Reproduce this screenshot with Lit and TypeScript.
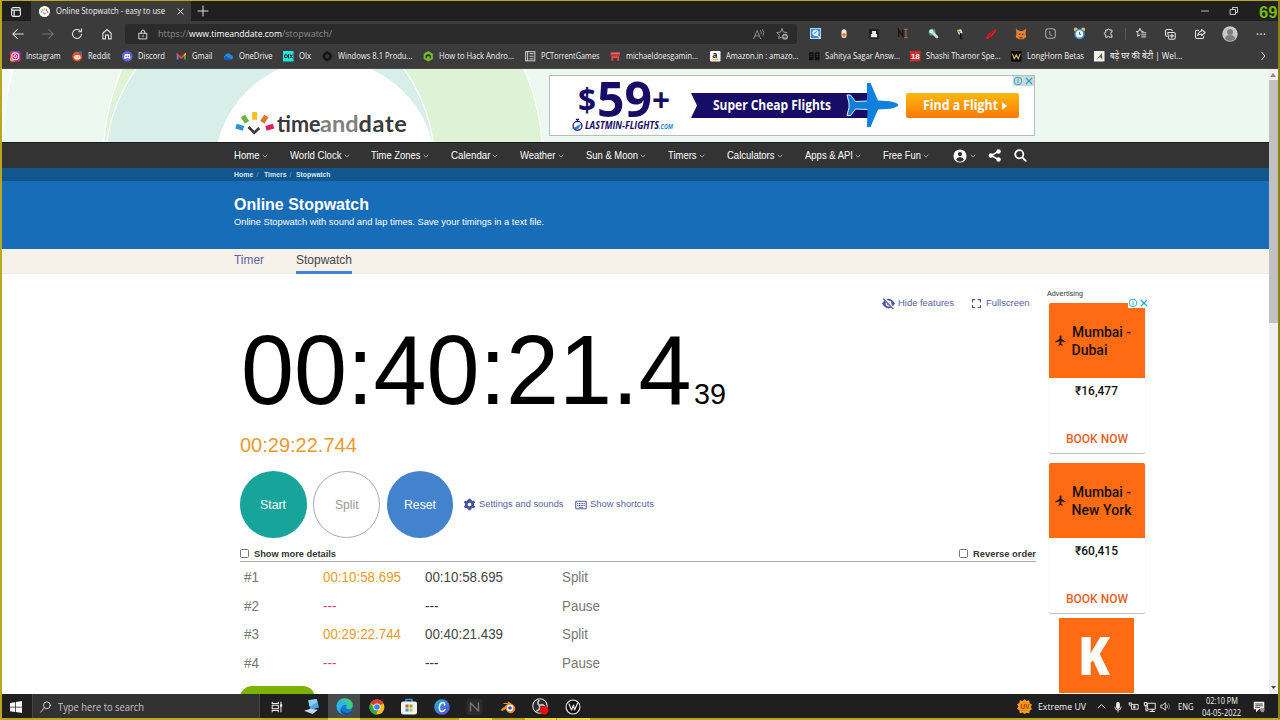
import { LitElement, html, svg, css } from "lit";
import { customElement } from "lit/decorators.js";

/* Text run that settles on an exact width: condensed when too wide, tracked out when too narrow. */
const t = (text: string, w = 0, cls = "") =>
  html`<span class="t ${cls}" data-w=${w}>${text}</span>`;

/* Row whose items begin at the listed x positions. */
const track = (cls: string, items: Array<[number, unknown]>, origin = 0) => {
  const xs = items.map((i) => i[0]);
  const cols = xs.map((x, i) => (i < xs.length - 1 ? `${(xs[i + 1] - x).toFixed(2)}px` : "auto")).join(" ");
  return html`<div class="track ${cls}" style="padding-left:${xs[0] - origin}px;grid-template-columns:${cols}">
    ${items.map((i) => html`<div class="cell">${i[1]}</div>`)}
  </div>`;
};

const icon = (w: number, h: number, body: unknown, vb = "0 0 16 16") =>
  html`<svg width=${w} height=${h} viewBox=${vb}>${body}</svg>`;
const line = (d: string, c = "#e4e4e4", sw = 1.4) =>
  svg`<path d=${d} fill="none" stroke=${c} stroke-width=${sw} stroke-linecap="round" stroke-linejoin="round"/>`;

const chev = icon(6, 6, line("M1 2l2 2.200 2-2.200", "#8fa0b5", 1), "0 0 6 6");

const toolbar: Array<[number, unknown]> = [
  [12, icon(12, 12, line("M15 8H1M7 2L1 8l6 6"))],
  [42, icon(12, 12, line("M1 8h14M9 2l6 6-6 6", "#777"))],
  [71, icon(12, 12, line("M14 8a6 6 0 1 1-2-4.500M14 1v4h-4"))],
  [101, icon(12, 12, line("M2.500 7L8 2l5.500 5v7.500h-3.500V9.500H6v5H2.500z"))],
];

const extensions: Array<[number, unknown]> = [
  [810, icon(11, 11, svg`<rect width="16" height="16" rx="1" fill="#3b8ad8"/><rect x=".7" y=".7" width="14.600" height="14.600" fill="none" stroke="#b8dcf8" stroke-width="1.400"/><circle cx="8" cy="7" r="4.500" fill="#e8f4fd"/><path d="M6 8l4-3" stroke="#3b8ad8" stroke-width="1.500"/><path d="M10 10l4 4" stroke="#fff" stroke-width="2"/>`)],
  [839, icon(10, 11, svg`<path d="M4 5q0-4 4-4t4 4v6q0 4-4 4t-4-4z" fill="#f6e9da"/><circle cx="8" cy="10" r="3" fill="#e8742c"/>`)],
  [869, icon(10, 10, svg`<rect width="16" height="16" rx="2" fill="#1f1f1f"/><path d="M5 3h6v5h2v5H3V8h2z" fill="#eee"/>`)],
  [898, icon(11, 11, svg`<path d="M1 13V3l6 9V3" fill="none" stroke="#171717" stroke-width="2.200"/><path d="M9 2h5M11.500 2v12M9 14h5" stroke="#a5673f" stroke-width="1.600" fill="none"/>`)],
  [928, icon(11, 11, svg`<circle cx="6" cy="6" r="5" fill="#4a9a9a"/><circle cx="5" cy="5" r="3" fill="#d9eef0"/><path d="M8 8l5 5" stroke="#d3dcdc" stroke-width="4" stroke-linecap="round"/>`)],
  [955, icon(11, 12, svg`<path d="M3 2l6-1 2 5-3 4-3-2z" fill="#f0d9b0"/><path d="M7 6l3 1-1 6 4 2H7z" fill="#101010"/><path d="M4 3l4 1-2 3z" fill="#b07b35"/>`)],
  [985, icon(12, 12, svg`<path d="M14 1l1 3-6 7-6 4-2-2 5-6z" fill="#e01b25"/><path d="M12 3L5 12" stroke="#8e0a12"/>`)],
  [1015, icon(12, 12, svg`<path d="M1 1l5 3h4l5-3-1 6 1 5-4 3H5l-4-3 1-5z" fill="#e9802c"/><path d="M5 8l2 1M11 8l-2 1M6 13h4" stroke="#45220f" stroke-width="1.500"/>`)],
  [1045, icon(11, 11, svg`<rect x="1" y="1" width="14" height="14" rx="4" fill="none" stroke="#aaa" stroke-width="1.500"/>${line("M7 5v4q0 2 3 2", "#aaa")}`)],
  [1073, icon(13, 13, svg`<circle cx="3.500" cy="3" r="2.500" fill="#e9c04a"/><circle cx="12.500" cy="3" r="2.500" fill="#e9c04a"/><circle cx="8" cy="8.500" r="6.500" fill="#3f8fd4"/><circle cx="8" cy="8.500" r="4.500" fill="#eef6fc"/><path d="M8 6v3h2" stroke="#28609a" fill="none"/>`)],
  [1103, icon(11, 11, line("M4 3h2.500a1.500 1.500 0 0 1 3 0H13v3a2 2 0 0 0 0 4v3.500H9.500a1.500 1.500 0 0 0-3 0H4V10a2 2 0 0 1 0-4z"))],
  [1118, html`<i class="sep"></i>`],
  [1135, icon(12, 11, line("M6.500 1l1.600 3.600L11 5M6.500 1L4.800 4.600 1 5.200l2.800 2.600L3 12l3.500-2M9 7h6M9 10h6M9 13h6"))],
  [1164, icon(12, 12, line("M4 11q-2 0-2-2V4q0-2 2-2h5q2 0 2 1.500M5 6h8q2 0 2 2v5q0 2-2 2H8q-2 0-2-2zM10.500 8v5M8 10.500h5"))],
  [1194, icon(12, 12, line("M6 3H4Q2 3 2 5v7q0 2 2 2h7q2 0 2-2v-1M10 2l5 4-5 4V8q-3 0-5 2 1-5 5-6z"))],
  [1222, icon(16, 16, svg`<circle cx="8" cy="8" r="7.700" fill="#c9c9c9"/><circle cx="8" cy="6" r="3" fill="#7d7d7d"/><path d="M3 13q0-4 5-4t5 4q-5 4-10 0z" fill="#7d7d7d"/>`)],
  [1256, icon(10, 10, svg`<g fill="#e4e4e4"><circle cx="2.500" cy="8" r="1.400"/><circle cx="8" cy="8" r="1.400"/><circle cx="13.500" cy="8" r="1.400"/></g>`)],
];

const marks: Array<[number, unknown, string, number]> = [
  [9.5, svg`<rect width="16" height="16" rx="4" fill="#d6337c"/><path d="M0 10l8 6H4q-4 0-4-4z" fill="#f5a83c"/><path d="M6 0h6q4 0 4 4v3z" fill="#7a3fd0"/><rect x="3" y="3" width="10" height="10" rx="3" fill="none" stroke="#fff" stroke-width="1.500"/><circle cx="8" cy="8" r="2.300" fill="none" stroke="#fff" stroke-width="1.500"/>`, "Instagram", 34.5],
  [71.5, svg`<circle cx="8" cy="8.500" r="7.500" fill="#ff4c1c"/><ellipse cx="8" cy="9.500" rx="5" ry="3.500" fill="#fff"/><circle cx="6" cy="9" r="1" fill="#ff4c1c"/><circle cx="10" cy="9" r="1" fill="#ff4c1c"/><circle cx="13" cy="2.500" r="2.500" fill="#256ec2"/>`, "Reddit", 22.5],
  [121.5, svg`<circle cx="8" cy="8" r="8" fill="#5865f2"/><path d="M4 5q4-2 8 0l1 6-2 1-1-1H6l-1 1-2-1z" fill="#fff"/><circle cx="6.300" cy="8.300" r="1.100" fill="#5865f2"/><circle cx="9.700" cy="8.300" r="1.100" fill="#5865f2"/>`, "Discord", 27],
  [175.5, svg`<path d="M1 3v10h3V6z" fill="#4285f4"/><path d="M15 3v10h-3V6z" fill="#34a853"/><path d="M1 2.500l7 6 7-6v4l-7 5.500-7-5.500z" fill="#ea4335"/><path d="M12 5l3-2.500V6l-3 2.500z" fill="#fbbc04"/>`, "Gmail", 20.5],
  [222.5, svg`<path d="M3 13a3.500 3.500 0 0 1 0-6 5 5 0 0 1 9-1 3.600 3.600 0 0 1 1 7z" fill="#1f8be0"/><path d="M3 13a3 3 0 0 1 2-5l8 5z" fill="#0b5fb8"/>`, "OneDrive", 33.5],
  [282.5, svg`<rect width="16" height="16" fill="#23e5db"/><circle cx="4.500" cy="8" r="2.200" fill="none" stroke="#002f34" stroke-width="1.600"/><path d="M8.500 4.500v7M10.500 5.500l4 5M14.500 5.500l-4 5" stroke="#002f34" stroke-width="1.600"/>`, "Olx", 12],
  [321.5, svg`<circle cx="8" cy="8" r="5" fill="none" stroke="#161616" stroke-width="4"/><path d="M8 0v3M8 13v3M0 8h3M13 8h3" stroke="#161616" stroke-width="2.500"/>`, "Windows 8.1 Produ...", 74.5],
  [422.5, svg`<path d="M8 0l7 4v8l-7 4-7-4V4z" fill="#78b82a"/><path d="M4 11V7q4-4 8 0v4h-2V8H6v3z" fill="#243611"/>`, "How to Hack Andro...", 75],
  [524.5, svg`<rect x="1" y="1" width="14" height="14" fill="none" stroke="#ddd" stroke-width="1.400"/><path d="M4 1v14M7 4h6M7 8h6M7 12h6" stroke="#ddd" stroke-width="1.400"/>`, "PCTorrentGames", 58.5],
  [609.5, svg`<path d="M1 2h14v5H1z" fill="#f05a5a"/><path d="M2 7h12v8h-3v-4H5v4H2z" fill="#d84848"/><path d="M1 6h14" stroke="#7a2222"/>`, "michaeldoesgamin...", 72],
  [709.5, svg`<rect width="16" height="16" rx="2" fill="#fff"/><text x="3.500" y="10.500" font-size="13" font-weight="700" font-family="Open Sans, sans-serif" fill="#111">a</text><path d="M3 12q5 3 10 0" stroke="#f90" stroke-width="1.600" fill="none"/>`, "Amazon.in : amazo...", 72.5],
  [808.5, svg`<path d="M0 2h7v12H0zM9 2h7v12H9z" fill="#101010"/><path d="M2 5h3M2 8h3M11 5h3M11 8h3" stroke="#555"/>`, "Sahitya Sagar Answ...", 75],
  [909.5, svg`<rect width="16" height="16" fill="#d32a2a"/><text x="1.500" y="12.500" font-size="12" font-weight="700" font-family="Liberation Sans, sans-serif" fill="#fff">18</text>`, "Shashi Tharoor Spe...", 74.5],
  [1010.5, svg`<rect width="16" height="16" fill="#050505"/><path d="M2 4l3 8 3-6 3 6 3-8" fill="none" stroke="#d5b35c" stroke-width="1.800"/>`, "LongHorn Betas", 57],
  [1094, svg`<rect width="16" height="16" fill="#f2f2ea"/><path d="M3 14L12 3l1 10-4-4z" fill="#566b4b"/>`, "बड़े घर की बेटी | Wel...", 72.5],
];

const nav: Array<[number, string, number]> = [
  [234, "Home", 25.5], [290, "World Clock", 51.5], [371, "Time Zones", 49.5], [450.5, "Calendar", 39.5],
  [520, "Weather", 35.5], [585.5, "Sun & Moon", 52], [668, "Timers", 28.5], [727, "Calculators", 47.5],
  [804.5, "Apps & API", 48], [883, "Free Fun", 38],
];

const laps = [
  ["#1", "00:10:58.695", "00:10:58.695", "Split"],
  ["#2", "---", "---", "Pause"],
  ["#3", "00:29:22.744", "00:40:21.439", "Split"],
  ["#4", "---", "---", "Pause"],
];

const adChoices = html`<svg class="choices" width="21" height="10" viewBox="0 0 21 10">
  <circle cx="5" cy="5" r="3.800" fill="none" stroke="#19a9c4" stroke-width="0.900"/>
  <path d="M5 4.200v3M5 2.500v1" stroke="#19a9c4" stroke-width="1"/>
  <path d="M13 2l6 6M19 2l-6 6" stroke="#19a9c4" stroke-width="1.200"/></svg>`;

const planeUp = icon(11, 11, svg`<path d="M15.500 11V9.400L9.400 5.800V2.200a1.400 1.400 0 0 0-2.800 0V5.800L.5 9.400V11l6.100-1.800v3.600L5 14.200V15.500L8 14.600l3 .9v-1.300L9.400 12.800V9.200z" fill="#1d1208"/>`);

const tasks: Array<[number, unknown]> = [
  [270, icon(14, 14, svg`<g stroke="#eee" fill="none" stroke-width="1.200"><path d="M2.500 2v2h7V2M2.500 14v-2h7v2M2.500 6h7v4h-7zM12.500 2v12"/></g><rect x="11.500" y="5" width="2.500" height="2.500" fill="#eee"/>`)],
  [303, icon(17, 17, svg`<path d="M5 2l8-1 2 8-8 2z" fill="#4aa8e8"/><path d="M5 2l8-1 .6 3L6 8z" fill="#8cd0f5"/><path d="M1 12l6-2 7 1-5 4z" fill="#c9d9e6"/>`)],
  [328, html`<div class="active">${icon(17, 17, svg`<circle cx="8" cy="8" r="7.800" fill="#1679cf"/><path d="M.5 7Q2 .2 8.500.2 15.800.8 15.800 7q-.5 3.500-4 3.500-3 0-2-2.500.5-3-3.500-3.500Q2 4.500.5 7z" fill="#3ccb8a"/><path d="M.5 7Q2 2 8 3q3 1 2.500 4-4-2-5.500 2-.5 4 5 6.200Q1 16 .5 7z" fill="#2fb4e6"/><path d="M5 9q0 5 6 5 3 0 4-2-2 3.500-6 3.800Q2 15 5 9z" fill="#0c4b99"/>`)}</div>`],
  [369, icon(16, 16, svg`<circle cx="8" cy="8" r="7.500" fill="#fbc116"/><path d="M8 8L1.500 4.200A7.500 7.500 0 0 1 14.500 4.200z" fill="#e33b2e"/><path d="M1.500 4.200A7.500 7.500 0 0 0 7 15.500L10 10 5 9z" fill="#2da94f"/><circle cx="8" cy="8" r="3.600" fill="#fff"/><circle cx="8" cy="8" r="2.800" fill="#3f7ee8"/>`)],
  [401, icon(16, 17, svg`<path d="M5 4V1h6v3" stroke="#2b9be0" stroke-width="1.500" fill="none"/><rect y="3" width="16" height="13" rx="2" fill="#f2f2f2"/><path d="M4.500 6H7.600v3H4.500z" fill="#e8502e"/><path d="M8.500 6h3v3h-3z" fill="#7cb82f"/><path d="M4.500 10H7.600v3H4.500z" fill="#2a9ee2"/><path d="M8.500 10h3v3h-3z" fill="#f6b51e"/>`)],
  [434, icon(16, 16, svg`<defs><linearGradient id="cv" x1="0" y1="0" x2="1" y2="1"><stop offset="0" stop-color="#13c2d0"/><stop offset="1" stop-color="#6a38e0"/></linearGradient></defs><circle cx="8" cy="8" r="7.800" fill="url(#cv)"/>${line("M10.500 6q.5-2.500-1.500-2.500-3.500.5-3.700 5.500.3 3.500 2.700 3.500 2 0 3-2", "#fff", 1.500)}`)],
  [466, icon(17, 16, svg`<rect width="16" height="16" rx="2" fill="#2b2b2b"/>${line("M4 12V4l8 8V4", "#747474", 1.400)}`)],
  [499, icon(17, 16, svg`<path d="M1 11l7-6H4V4h5L8 2l6 4q3 3 1 6-3 4-7 1l-2-3-3 2z" fill="#f08b1d"/><circle cx="10.500" cy="9" r="3.200" fill="#fff"/><circle cx="10.500" cy="9" r="1.800" fill="#1d5a9e"/>`)],
  [532, icon(17, 17, svg`<circle cx="7.500" cy="7.500" r="6.800" fill="#2a2a2a" stroke="#ddd"/><path d="M7 2q-3 3 0 5M12 9q-1-4-5-2M4 12q4 0 3-5" stroke="#bbb" stroke-width="1.700" fill="none"/><circle cx="11.500" cy="11.500" r="4" fill="#f00a0a"/>`)],
  [564.5, icon(16, 16, svg`<circle cx="8" cy="8" r="7" fill="#111" stroke="#eee" stroke-width="1.100"/>${line("M4 5l2.500 6L8.500 6l1 5 3-6.500", "#eee", 1.200)}`)],
];

const tray: Array<[number, unknown]> = [
  [1017, icon(15, 15, svg`<path d="M8 0l2 2 3-.6.600 3L16 6l-1.500 2.500L16 11l-2.500 1.300-.5 3-3-.6L8 16l-2-1.500-3 .6-.5-3L0 10.500 1.500 8 0 5.500l2.500-1.200.5-3L6 2z" fill="#f7a41d"/><circle cx="8" cy="8" r="5.500" fill="#fb8c1b"/><text x="3.800" y="10.500" font-size="7" font-weight="700" font-family="Liberation Sans, sans-serif" fill="#a34a08">UV</text>`)],
  [1038, t("Extreme UV", 48, "ui")],
  [1097, icon(9, 9, line("M2 10.500l6-6 6 6", "#eee", 1.700))],
  [1113, icon(10, 12, svg`<rect x="5" y="0" width="6" height="11" rx="3" fill="#eee"/>${line("M3 8q0 5 5 5t5-5M8 13v3", "#eee", 1.300)}`)],
  [1128, icon(12, 11, svg`${line("M5 5h9v7H5zM1 3h3M1 3v3q2 2 3 0V3", "#eee", 1.300)}<rect x="7" y="6.500" width="3" height="4" fill="#eee"/>`)],
  [1144, icon(12, 12, line("M5 3h10v8H5zM8 14h6M11 11v3M1 2h3v4H1zM2.500 6v7H5", "#eee", 1.300))],
  [1160, icon(12, 11, svg`${line("M1 6h2l4-3.500v11L3 10H1z", "#eee", 1.200)}${line("M9.500 6q1.500 2 0 4", "#eee", 1.200)}${line("M12 4q3 4 0 8", "#888", 1.200)}`)],
  [1178, t("ENG", 15.5, "ui")],
  [1202, html`<div class="when">${t("02:10 PM", 32, "ui")}${t("04-05-2022", 39, "ui")}</div>`],
  [1252.5, icon(12, 12, svg`<path d="M1 1h14v10H8l-4 4v-4H1z" fill="#eee"/><path d="M3 4h10M3 6.300h10M3 8.600h6" stroke="#222"/><circle cx="12.500" cy="12" r="3" fill="#999"/>`)],
];

@customElement("app-root")
export class AppRoot extends LitElement {
  static styles = css`
    :host { display: block; width: 1280px; height: 720px; overflow: hidden; font-family: "Liberation Sans", Arial, sans-serif; }
    * { box-sizing: border-box; }
    svg { display: block; flex: none; overflow: visible; }
    .screen { position: relative; display: flex; flex-direction: column; width: 1280px; height: 720px; background: #fff; overflow: hidden; }
    .frame { position: absolute; inset: 0; border: 2px solid #b9a81c; border-width: 1px 2px 2px 2px; border-right-color: #8d8212; pointer-events: none; }
    .track { display: grid; align-items: center; width: 100%; flex: none; overflow: hidden; }
    .cell { display: flex; align-items: center; white-space: nowrap; min-width: 0; }
    .t { display: inline-block; white-space: nowrap; flex: none; transform-origin: 0 50%; }
    .ui { font-family: "Open Sans", "Noto Sans", sans-serif; font-size: 9.300px; line-height: 12px; color: #f2f2f2; }

    .tabs { display: flex; height: 21px; background: #202020; flex: none; }
    .tabact { width: 31px; display: flex; align-items: center; padding-left: 11px; padding-top: 2px; }
    .tab { width: 160px; background: #3b3b3b; display: flex; align-items: center; padding: 1px 7px 0 8px; }
    .tab .ui { margin: -1px auto 0 6px; }
    .newtab { width: 24px; display: flex; align-items: center; justify-content: center; padding-top: 1px; }
    .winctl { margin-left: auto; display: flex; align-items: center; gap: 21px; padding-right: 3px; }
    .fps { font: 700 17px/20px "Liberation Sans", sans-serif; color: #76b900; margin-top: 4px; }
    .bar { display: flex; height: 25px; background: #3b3b3b; flex: none; }
    .bar .track { height: 25px; }
    .navbtns { width: 125px !important; }
    .field { width: 672px; height: 20px; margin-top: 3px; background: #2b2b2b; border-radius: 2px; display: flex; align-items: center; padding: 0 9px 0 13px; flex: none; }
    .url { display: flex; margin-left: 10px; flex: 1; }
    .url .ui { font-size: 9.600px; color: #8c8c8c; }
    .url .host { color: #fff; }
    .field .gap { margin-right: 12px; }
    .ext { width: 483px !important; }
    .sep { width: 1px; height: 12px; margin-left: 7px; background: #5c5c5c; }
    .marks { height: 23px; background: #3b3b3b; border-bottom: 1px solid #4b4b4b; padding-bottom: 1.500px; }
    .marks .cell svg { margin-right: 5.500px; }

    .view { display: flex; height: 625px; flex: none; overflow: hidden; }
    .page { width: 1268.500px; overflow: hidden; flex: none; }
    .scroll { flex: 1; background: #f1f1f1; display: flex; flex-direction: column; align-items: center; justify-content: space-between; padding-right: 2px; height: 625px; }
    .thumb { width: 9px; height: 243px; background: #c1c1c1; margin-bottom: auto; margin-top: 3px; }
    .up { margin-top: 4px; } .down { margin-bottom: 5px; }

    .masthead { height: 73px; display: grid; grid-template: 73px / 1268.500px; background: #ecf7ef; }
    .masthead > * { grid-area: 1 / 1; }
    .backdrop { overflow: hidden; }
    .brand { display: flex; padding: 6px 0 0 235px; }
    .mark { margin-top: 35px; }
    .word { margin: 35px 0 0 1.500px; font: 700 23.500px/26px Lato, sans-serif; color: #3a3a3c; width: 272px; flex: none; display: flex; }
    .word .mid { color: #818183; }
    .ad { width: 486px; height: 61px; background: #fff; border: 1px solid #b9bdb9; display: flex; align-items: flex-start; position: relative; flex: none; }
    .ad .choices { position: absolute; right: 0; top: 0; background: #cfd8dc; }
    .fare { width: 141px; padding: 4px 0 0 22px; color: #170c66; font-family: "Open Sans", sans-serif; font-weight: 700; }
    .sum { display: flex; align-items: center; height: 39px; padding-left: 6px; line-height: 39px; }
    .sum .s { font-size: 33px; } .sum .n { font-size: 48.500px; margin: -2px 0 0 1px; } .sum .p { font-size: 33px; margin-top: -1px; }
    .last { display: flex; align-items: center; height: 12px; font: italic 700 10px/12px "Open Sans", sans-serif; margin-left: -1px; }
    .last .com { color: #1f86d6; font-size: 7.500px; margin-top: 2px; }
    .last svg { margin-right: 1px; }
    .ribbon { width: 179px; height: 25px; margin-top: 17px; background: #170c66; padding-left: 22px; position: relative; color: #fff; font: 700 13.400px/24px "Open Sans", sans-serif; flex: none; }
    .ribbon .notch { position: absolute; left: 0; top: 0; }
    .ribbon .plane { position: absolute; left: 155px; top: -11px; }
    .find { margin: 17px 0 0 36px; width: 113px; height: 25px; border-radius: 2px; background: linear-gradient(#fdb80f, #fb7a07); color: #fff; font: 700 13.400px/25px "Open Sans", sans-serif; padding-left: 17px; display: flex; align-items: center; gap: 4px; }

    .nav { height: 26px; background: #333; border-top: 1px solid #1c1c1c; }
    .nav .t { font-size: 10.200px; line-height: 14px; color: #fff; margin-right: 2px; }
    .crumbs { height: 13px; background: #12568f; }
    .crumbs .t { font-size: 7.300px; line-height: 10px; color: #d5e6f3; font-weight: 700; }
    .crumbs .t + .t { margin-left: 3px; font-weight: 400; color: #6b9cc5; }
    .hero { height: 68px; background: #176db7; padding: 13px 0 0 234px; color: #fff; }
    .hero .h { display: flex; font-size: 16.200px; line-height: 20px; font-weight: 700; }
    .hero .d { display: flex; font-size: 9.600px; line-height: 12px; margin-top: 2px; }
    .subtabs { display: flex; height: 25px; background: #f6f1e9; padding-left: 234.400px; border-bottom: 1px solid #f0ebe6; font-size: 12.600px; line-height: 22.500px; gap: 32px; }
    .subtabs .off { color: #5f63a8; }
    .subtabs .on { color: #444; border-bottom: 3px solid #4383cd; height: 25px; }

    .body { display: flex; height: 420px; }
    .main { width: 796px; margin-left: 240px; flex: none; }
    .link { font-size: 9.700px; line-height: 12px; color: #5b60a6; }
    .tools { display: flex; justify-content: flex-end; align-items: center; height: 14px; margin-top: 22px; padding-right: 6.500px; }
    .tools svg { margin-right: 3px; } .tools .fs { margin-left: 18px; margin-right: 2px; }
    .clock { display: flex; align-items: baseline; height: 110px; margin-top: 5px; color: #000; }
    .clock .big { font-size: 98.500px; line-height: 110px; margin: 0 2px 0 1px; } .clock .small { font-size: 29.500px; }
    .split { font-size: 20.800px; line-height: 24px; color: #e9992e; margin-top: 8px; margin-left: -0.300px; display: flex; }
    .btns { display: flex; align-items: center; margin-top: 14px; height: 67px; }
    .round { width: 66.500px; height: 66.500px; border-radius: 50%; display: flex; align-items: center; justify-content: center; font-size: 12.600px; color: #fff; margin-right: 6.800px; }
    .go { background: #17a59b; } .rs { background: #4383cd; margin-right: 9.500px; } .sp { border: 1px solid #aaa; color: #999; }
    .btns .link { margin-left: 3px; margin-right: 12px; margin-top: -1px; }
    .opts { display: flex; align-items: center; height: 24px; border-bottom: 1px solid #aaa; padding-top: 7px; font-size: 9.500px; font-weight: 700; color: #333; gap: 5px; }
    .box { width: 9px; height: 9px; border: 1px solid #767676; border-radius: 1.500px; background: #fff; }
    .push { margin-left: auto; }
    .lap { height: 28.700px; padding-top: 1px; }
    .lap .t { font-size: 14px; line-height: 16px; color: #777; }
    .lap .o { color: #eb9b28; } .lap .g { color: #444; } .lap .r { color: #dc4470; } .lap .k { color: #333; }
    .save { width: 75px; height: 24px; border-radius: 12px; background: #7cb302; margin-top: 9px; }

    .side { margin-left: 12px; width: 110px; padding-top: 15px; }
    .adv { font-size: 7.200px; line-height: 10px; color: #333; display: flex; margin-left: -1px; }
    .card { position: relative; width: 96.500px; height: 150px; margin: 4px 0 10px 0.500px; border-radius: 2px; background: #fff; box-shadow: 0 1px 1px rgba(0,0,0,0.25); font: 500 12px/14px Roboto, sans-serif; color: #111; text-align: center; }
    .card + .card { margin-top: 0; }
    .card .choices { position: absolute; right: -4px; top: -5px; background: #fff; }
    .route { height: 75px; background: #ff6b12; display: flex; align-items: center; padding-left: 6px; text-align: left; font-size: 14px; line-height: 18px; gap: 6px; border-radius: 2px 2px 0 0; }
    .route div { display: flex; flex-direction: column; align-items: flex-start; }
    .cost, .book { display: flex; justify-content: center; }
    .cost { padding-top: 6px; font-size: 12.200px; } .book { padding-top: 34px; color: #e65f1e; font-size: 12.200px; }
    .kay { width: 75px; height: 75px; margin: -5px 0 0 11px; background: #ff6b12; color: #fff; font: 800 53px/73px "Open Sans", sans-serif; padding-left: 19px; }

    .taskbar { display: flex; height: 26px; background: #1f1f1f; flex: none; }
    .start { width: 32px; display: flex; align-items: center; justify-content: center; }
    .search { width: 228px; background: #323232; border: 1px solid #444; border-width: 0 1px; display: flex; align-items: center; padding-left: 7px; gap: 7px; }
    .search .ui { color: #c5c5c5; font-size: 10px; }
    .start, .search, .taskbar .track { height: 25px; }
    .apps { width: 740px !important; } .tray { width: 280px !important; }
    .active { width: 32px; height: 25px; background: #474b4e; display: flex; align-items: center; justify-content: center; }
    .when { display: flex; flex-direction: column; align-items: center; width: 39px; }
    .runs { position: absolute; left: 0; bottom: 0; }
  `;

  firstUpdated() {
    this.renderRoot.querySelectorAll<HTMLElement>("[data-w]").forEach((el) => {
      const want = Number(el.dataset.w);
      if (!want) return;
      const have = el.getBoundingClientRect().width;
      if (have > want) {
        el.style.width = `${want}px`;
        el.style.transform = `scaleX(${(want / have).toFixed(4)})`;
      } else {
        el.style.letterSpacing = `${((want - have) / (el.textContent || " ").length).toFixed(3)}px`;
      }
    });
  }

  card(city: string, w: number, price: string, marked: boolean) {
    return html`<div class="card">
      <div class="route">${planeUp}<div>${t("Mumbai -", 59)}${t(city, w)}</div></div>
      <div class="cost">${t(price, 43)}</div>
      <div class="book">${t("BOOK NOW", 62)}</div>
      ${marked ? adChoices : ""}
    </div>`;
  }

  render() {
    return html`<div class="screen">
      <div class="tabs">
        <div class="tabact">${icon(10, 10, svg`<rect x="1" y="1" width="14" height="14" rx="2.500" fill="none" stroke="#eee" stroke-width="1.800"/><path d="M1 5h14M5 5v10" stroke="#eee" stroke-width="2"/>`)}</div>
        <div class="tab">
          ${icon(11, 11, svg`<circle cx="8" cy="8" r="8" fill="#fff"/><path d="M2.500 9l2-.5M4.500 5l1.500 1.500" stroke="#3fa54a" stroke-width="2"/><path d="M8 3v2.500" stroke="#f5b81c" stroke-width="2"/><path d="M11.500 5L10 6.500M13.500 9l-2-.5" stroke="#dd3355" stroke-width="2"/><path d="M6 9l2 3 2-2.500" stroke="#555" fill="none"/>`)}
          ${t("Online Stopwatch - easy to use", 109, "ui")}
          ${icon(7, 7, line("M2 2l12 12M14 2L2 14", "#eee", 2.200))}
        </div>
        <div class="newtab">${icon(10, 10, line("M8 0v16M0 8h16", "#ddd", 1.600))}</div>
        <div class="winctl">
          ${icon(8, 8, line("M1 8h14", "#ccc", 1.800))}
          ${icon(8, 8, line("M1 5h10v10H1zM5 5V1h10v10h-4", "#ddd", 1.800))}
          <span class="fps">${t("69", 18.5)}</span>
        </div>
      </div>

      <div class="bar">
        ${track("navbtns", toolbar)}
        <div class="field">
          ${icon(10, 11, svg`${line("M2 6h12v9H2zM5 6V4q0-3 3-3t3 3v2", "#e4e4e4", 1.500)}<circle cx="8" cy="10.500" r="1.300" fill="#e4e4e4"/>`)}
          <div class="url">${t("https://", 31, "ui")}${t("www.timeanddate.com", 93, "ui host")}${t("/stopwatch/", 50, "ui")}</div>
          <div class="gap">${icon(11, 11, line("M1 14L6 2l5 12M3 10h6M11 2q2 2 1 5M14 1q3 4 1 8", "#9a9a9a", 1.200))}</div>
          ${icon(12, 12, svg`${line("M8 1l2 4.500 4.500.5M8 1L6 5.500 1 6l3.500 3.500L3.500 14 8 12", "#a5a5a5", 1.200)}<circle cx="12" cy="11.500" r="4" fill="#a5a5a5"/><path d="M12 9v5M9.500 11.500h5" stroke="#2b2b2b"/>`)}
        </div>
        ${track("ext", extensions, 797)}
      </div>

      ${track("marks", [
        ...marks.map((m): [number, unknown] => [m[0], html`${icon(10.5, 10.5, m[1])}${t(m[2], m[3], "ui")}`]),
        [1258, icon(10, 10, line("M6 2l5 6-5 6", "#ddd", 1.500))],
      ])}

      <div class="view">
        <div class="page">
          <div class="masthead">
            <svg class="backdrop" width="1268" height="73" viewBox="0 69 1268 73">
              <rect y="69" width="1268" height="73" fill="#edf8f0"/>
              <path d="M0 69H13Q6 90 2 142H0z" fill="#f4fbf6"/>
              <path d="M13 69Q6 90 2 142" fill="none" stroke="#fff" stroke-width="1.200"/>
              <circle cx="323" cy="157.500" r="219.600" fill="#def3d6" stroke="#fff" stroke-width="1.200"/>
              <circle cx="270" cy="164.800" r="164.700" fill="#d8eee9" stroke="#fff" stroke-width="1.200"/>
              <circle cx="325" cy="169.800" r="110.800" fill="#fff"/>
            </svg>
            <div class="brand">
              <svg class="mark" width="40" height="26" viewBox="235 110 40 26">
                <g stroke-width="5"><path d="M236 126.200l7.500 2.200" stroke="#2b94c8"/><path d="M243 116l4 6.300" stroke="#6cb33f"/><path d="M254.600 112v7.800" stroke="#f6c31c"/><path d="M266.300 116l-4 6.300" stroke="#e0762c"/><path d="M273.500 126.200l-7.500 2.200" stroke="#dd1f5f"/></g>
                <path d="M248.500 127l5.800 5.600 5-4.600" fill="none" stroke="#3a3a3c" stroke-width="2.600"/>
              </svg>
              <div class="word">${t("time", 43.5)}${t("and", 38.5, "mid")}${t("date", 49)}</div>
              <div class="ad">
                <div class="fare">
                  <div class="sum">${t("$", 18, "s")}${t("59", 55, "n")}${t("+", 18, "p")}</div>
                  <div class="last">${icon(13, 14, svg`<circle cx="8" cy="9" r="5.500" fill="none" stroke="#170c66" stroke-width="1.500"/><path d="M6 1h4M8 1v2" stroke="#170c66" stroke-width="1.500"/><path d="M1 13l12-7-4 7z" fill="#1f86d6"/>`)}${t("LASTMIN-FLIGHTS", 74)}${t(".COM", 14, "com")}</div>
                </div>
                <div class="ribbon">
                  <svg class="notch" width="6" height="25"><path d="M0 0l6 12.500L0 25z" fill="#fff"/></svg>
                  ${t("Super Cheap Flights", 118)}
                  <svg class="plane" width="53" height="46" viewBox="0 0 53 46"><path d="M1 13h3.500l5 6.500 11.500-.5V1h3.500L32 18.500l12 .7q8 1.800 8.500 3.800-.5 2-8.500 3.800l-12 .7L24.500 45H21l.5-17.500L9.500 27l-5 6.500H1l2-8v-4.500z" fill="#0f80dc"/><path d="M21 19l-11.500.5L4.500 13H1l2 8v4.500l-2 8h3.500l5-6.500 12 .5" fill="none" stroke="#fff" stroke-width="0.900"/></svg>
                </div>
                <div class="find">${t("Find a Flight", 75)}${icon(5, 8, svg`<path d="M0 0l5 4-5 4z" fill="#fff"/>`, "0 0 5 8")}</div>
                ${adChoices}
              </div>
            </div>
          </div>

          ${track("nav", [
            ...nav.map((n): [number, unknown] => [n[0], html`${t(n[1], n[2])}${chev}`]),
            [952.5, html`${icon(14, 14, svg`<circle cx="8" cy="8" r="7.500" fill="#fff"/><circle cx="8" cy="5.800" r="2.500" fill="#333"/><path d="M3.500 12q1-3 4.500-3t4.500 3q-2 2.500-4.500 2.500T3.500 12z" fill="#333"/>`)}`],
            [969.5, chev],
            [988, icon(13, 13, svg`<path d="M13 3L4 8l9 5" stroke="#fff" stroke-width="1.800" fill="none"/><g fill="#fff"><circle cx="13" cy="3" r="2.700"/><circle cx="3.500" cy="8" r="2.700"/><circle cx="13" cy="13" r="2.700"/></g>`)],
            [1014, icon(13, 13, line("M11.500 6.500a5 5 0 1 1-10 0 5 5 0 0 1 10 0zM10.500 10.500l4 4", "#fff", 2.200))],
          ])}
          ${track("crumbs", [
            [234, html`${t("Home", 19.5)}${t("/")}`], [264, html`${t("Timers", 22.5)}${t("/")}`], [296, t("Stopwatch", 34.5)],
          ])}
          <div class="hero">
            <div class="h">${t("Online Stopwatch", 135)}</div>
            <div class="d">${t("Online Stopwatch with sound and lap times. Save your timings in a text file.", 310)}</div>
          </div>
          <div class="subtabs"><div class="off">${t("Timer", 30)}</div><div class="on">${t("Stopwatch", 56)}</div></div>

          <div class="body">
            <div class="main">
              <div class="tools">
                ${icon(13, 13, svg`<path d="M0 8q8-12 16 0-8 12-16 0z" fill="#4a51a3"/><circle cx="8" cy="8" r="3.600" fill="#fff"/><circle cx="8" cy="8" r="2" fill="#4a51a3"/><path d="M2 1l13 14" stroke="#fff" stroke-width="3"/><path d="M1.500 2L14 15" stroke="#4a51a3" stroke-width="1.500"/>`)}
                ${t("Hide features", 56, "link")}
                <div class="fs">${icon(9, 9, line("M1 5V1h4M11 1h4v4M15 11v4h-4M5 15H1v-4", "#50547e", 2))}</div>
                ${t("Fullscreen", 43.5, "link")}
              </div>
              <div class="clock">${t("00:40:21.4", 450.5, "big")}${t("39", 32, "small")}</div>
              <div class="split">${t("00:29:22.744", 116.8)}</div>
              <div class="btns">
                <div class="round go">${t("Start", 26)}</div>
                <div class="round sp">${t("Split", 23.5)}</div>
                <div class="round rs">${t("Reset", 32)}</div>
                ${icon(13, 13, svg`<circle cx="8" cy="8" r="4" fill="none" stroke="#4a51a3" stroke-width="3.400"/><g stroke="#4a51a3" stroke-width="3.200"><path d="M8 .8v3M8 12.200v3M1.800 4.400l2.600 1.500M11.600 10.100l2.600 1.500M1.800 11.600l2.600-1.500M11.600 5.900l2.600-1.500"/></g>`)}
                ${t("Settings and sounds", 84.5, "link")}
                ${icon(12, 12, svg`<rect x="1" y="3" width="14" height="10" rx="1" fill="none" stroke="#5b60a6" stroke-width="1.500"/><path d="M3 6h10M3 8.500h10" stroke="#5b60a6" stroke-width="1.400" stroke-dasharray="1.500 0.700"/><path d="M5 11h6" stroke="#5b60a6" stroke-width="1.300"/>`)}
                ${t("Show shortcuts", 64, "link")}
              </div>
              <div class="opts"><i class="box"></i>${t("Show more details", 82)}<i class="box push"></i>${t("Reverse order", 63)}</div>
              ${laps.map((l) => {
                const rest = l[1] === "---";
                return track("lap", [
                  [244, t(l[0], 15)],
                  [323.4, t(l[1], rest ? 13.5 : 78, rest ? "r" : "o")],
                  [425, t(l[2], rest ? 13.5 : 78, rest ? "k" : "g")],
                  [562, t(l[3], rest ? 38 : 26)],
                ], 240);
              })}
              <div class="save"></div>
            </div>
            <div class="side">
              <div class="adv">${t("Advertising", 36)}</div>
              ${this.card("Dubai", 36, "₹16,477", true)}
              ${this.card("New York", 60, "₹60,415", false)}
              <div class="kay">${t("K", 32)}</div>
            </div>
          </div>
        </div>
        <div class="scroll">
          <svg class="up" width="6" height="4"><path d="M0 4l3-4 3 4z" fill="#8a8a8a"/></svg>
          <div class="thumb"></div>
          <svg class="down" width="5" height="3"><path d="M0 0h5L2.500 3z" fill="#444"/></svg>
        </div>
      </div>

      <div class="taskbar">
        <div class="start">${icon(12, 12, svg`<path d="M0 2.500L7 1.500v6H0zM8 1.300L16 0v7.500H8zM0 8.500h7v6l-7-1zM8 8.500h8V16l-8-1.300z" fill="#fff"/>`)}</div>
        <div class="search">${icon(11, 12, line("M15 5.500a5 5 0 1 1-10 0 5 5 0 0 1 10 0zM6 9.500l-5 6", "#ddd", 1.300))}${t("Type here to search", 86, "ui")}</div>
        ${track("apps", tasks, 260)}
        ${track("tray", tray, 1000)}
      </div>
      <div class="frame"></div>
      <svg class="runs" width="600" height="2"><path d="M459 1h33M525 1h31M557 1h33M328 1h32" stroke="#e8d93a" stroke-width="2"/></svg>
    </div>`;
  }
}
